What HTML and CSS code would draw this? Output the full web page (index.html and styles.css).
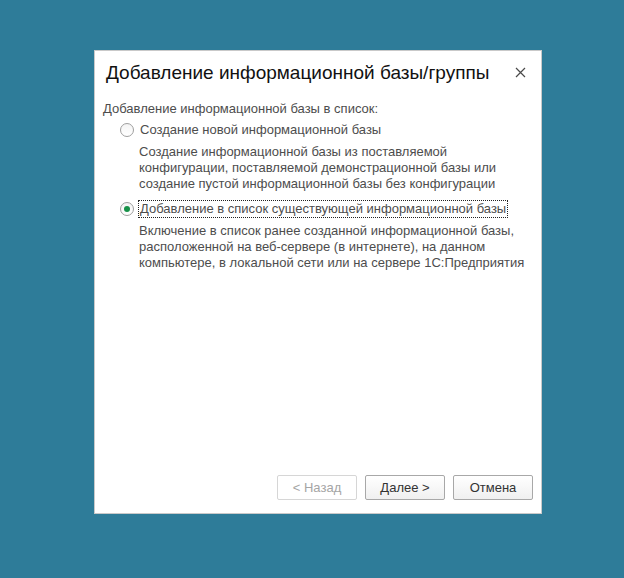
FILE: index.html
```html
<!DOCTYPE html>
<html lang="ru">
<head>
<meta charset="utf-8">
<link rel="stylesheet" href="styles.css">
</head>
<body>
<div class="dialog">
  <div class="header">
    <div class="title">Добавление информационной базы/группы</div>
    <div class="close">
      <svg width="11" height="11" viewBox="0 0 11 11"><path d="M1 1L10 10M10 1L1 10" stroke="#4a4a4a" stroke-width="1.2" fill="none"/></svg>
    </div>
  </div>
  <div class="content">
    <div class="caption">Добавление информационной базы в список:</div>
    <div class="option">
      <div class="radio-row">
        <span class="radio"></span>
        <span class="label">Создание новой информационной базы</span>
      </div>
      <div class="desc">Создание информационной базы из поставляемой<br>конфигурации, поставляемой демонстрационной базы или<br>создание пустой информационной базы без конфигурации</div>
    </div>
    <div class="option">
      <div class="radio-row">
        <span class="radio checked"></span>
        <span class="label focused">Добавление в список существующей информационной базы</span>
      </div>
      <div class="desc">Включение в список ранее созданной информационной базы,<br>расположенной на веб-сервере (в интернете), на данном<br>компьютере, в локальной сети или на сервере 1С:Предприятия</div>
    </div>
  </div>
  <div class="footer">
    <button class="btn disabled">&lt; Назад</button>
    <button class="btn">Далее &gt;</button>
    <button class="btn">Отмена</button>
  </div>
</div>
</body>
</html>
```
FILE: styles.css
```css
html, body {
  margin: 0;
  padding: 0;
}
body {
  background: #2e7c99;
  width: 624px;
  height: 578px;
  font-family: "Liberation Sans", Arial, sans-serif;
  padding-top: 50px;
  padding-left: 94px;
  box-sizing: border-box;
}
.dialog {
  width: 448px;
  height: 464px;
  box-sizing: border-box;
  background: #fff;
  border: 1px solid #c9c9c9;
  display: flex;
  flex-direction: column;
}
.header {
  display: flex;
  align-items: center;
  justify-content: space-between;
  height: 42px;
  padding: 0 15px 0 11px;
}
.title {
  font-size: 19px;
  color: #111;
  padding-top: 1px;
}
.close {
  width: 11px;
  height: 11px;
  display: flex;
}
.content {
  flex: 1;
  padding: 8px 8px 0 8px;
  color: #4d4d4d;
  font-size: 13px;
  line-height: 16px;
}
.caption {
  margin-bottom: 4px;
}
.option {
  padding-left: 17px;
  margin-bottom: 8px;
}
.radio-row {
  display: flex;
  align-items: center;
  height: 18px;
}
.radio {
  width: 14px;
  height: 14px;
  box-sizing: border-box;
  border: 1px solid #9e9e9e;
  border-radius: 50%;
  background: linear-gradient(#f4f4f4, #ffffff);
  margin-right: 6px;
  display: flex;
  align-items: center;
  justify-content: center;
}
.radio.checked::after {
  content: "";
  width: 6px;
  height: 6px;
  border-radius: 50%;
  background: #169148;
}
.label {
  color: #4d4d4d;
  border: 1px solid transparent;
  padding: 0 1px;
  margin-left: -2px;
}
.label.focused {
  border: 1px dotted #222;
}
.desc {
  padding-left: 19px;
  margin-top: 5px;
}
.footer {
  display: flex;
  justify-content: flex-end;
  gap: 8px;
  padding: 0 8px 13px 0;
}
.btn {
  width: 80px;
  height: 25px;
  box-sizing: border-box;
  border: 1px solid #a8a8a8;
  border-radius: 2px;
  background: linear-gradient(#ffffff, #f0f0f0);
  font-family: "Liberation Sans", Arial, sans-serif;
  font-size: 13px;
  color: #333;
  padding: 0;
}
.btn.disabled {
  color: #a5a5a5;
  border-color: #d6d6d6;
  background: #fff;
}
```
